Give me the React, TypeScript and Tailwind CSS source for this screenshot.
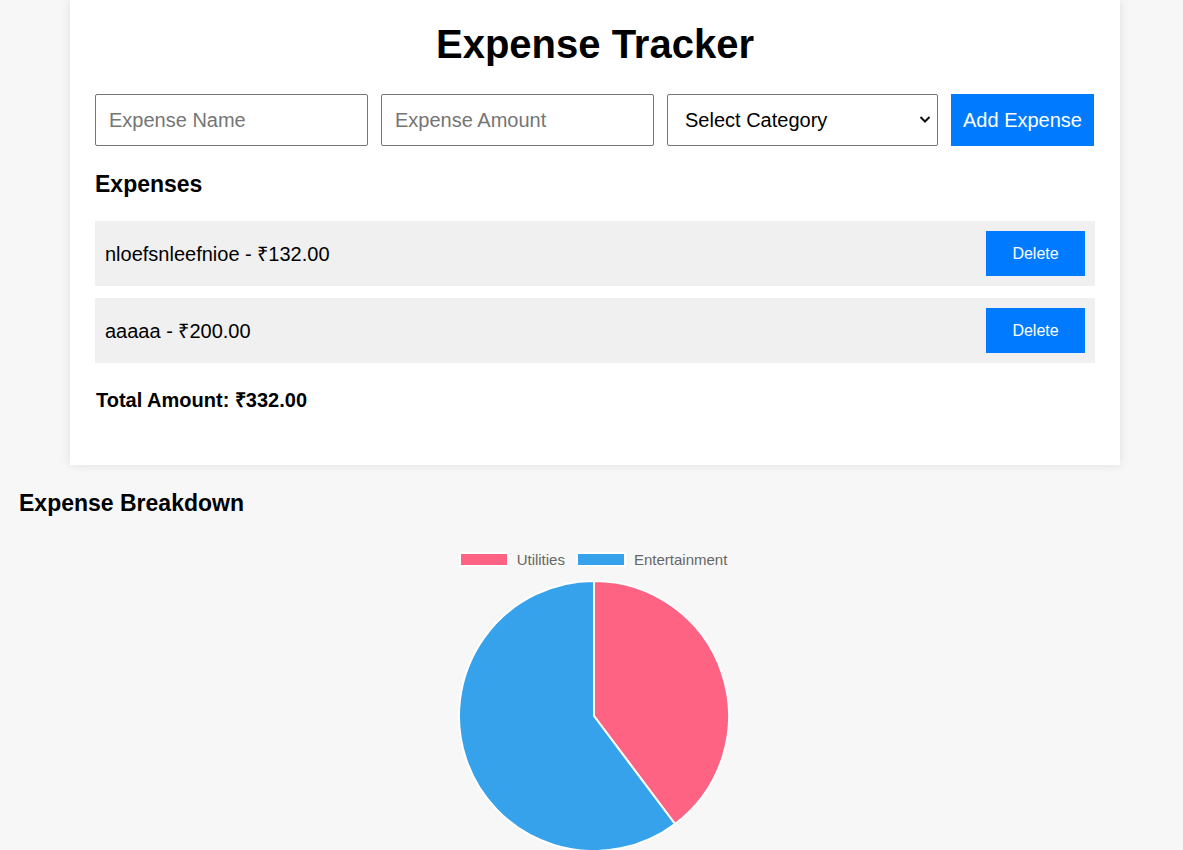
import { useState } from 'react';

type Expense = { id: number, name: string, amount: number, category: string };

const initialExpenses: Expense[] = [
  { id: 1, name: 'nloefsnleefnioe', amount: 132, category: 'Utilities' },
  { id: 2, name: 'aaaaa', amount: 200, category: 'Entertainment' },
];

const colors: Record<string, string> = {
  Utilities: '#ff6384',
  Entertainment: '#36a2eb',
};

function PieChart(props: { expenses: Expense[] }) {
  const totals: Record<string, number> = {};
  props.expenses.forEach(e => { totals[e.category] = (totals[e.category] || 0) + e.amount; });
  const entries = Object.entries(totals);
  const sum = entries.reduce((s, [, v]) => s + v, 0);

  const cx = 137, cy = 137, r = 135;
  let angle = 0;
  const slices = entries.map(([name, value]) => {
    const start = angle;
    angle += (value / sum) * Math.PI * 2;
    const x1 = cx + r * Math.sin(start), y1 = cy - r * Math.cos(start);
    const x2 = cx + r * Math.sin(angle), y2 = cy - r * Math.cos(angle);
    const large = angle - start > Math.PI ? 1 : 0;
    return { name, d: `M${cx},${cy} L${x1},${y1} A${r},${r} 0 ${large} 1 ${x2},${y2} Z` };
  });

  return (
    <div className="flex flex-col items-center pl-[5px]">
      <div className="flex items-center gap-[9px] h-[15px] text-[15px] text-[#666]">
        {entries.map(([name]) => (
          <div key={`legend-${name}`} className="flex items-center gap-[8px] mr-[2px]">
            <span className="block w-[50px] h-[15px] border-2 border-white" style={{ backgroundColor: colors[name] }}/>
            <span className="leading-[15px]">{name}</span>
          </div>
        ))}
      </div>
      <svg width="274" height="274" viewBox="0 0 274 274" className="mt-[12px]">
        {slices.map(s => (
          <path key={`slice-${s.name}`} d={s.d} fill={colors[s.name]} stroke="#fff" strokeWidth="2" strokeLinejoin="round"/>
        ))}
      </svg>
    </div>
  );
}

export default function App() {
  const [expenses] = useState(initialExpenses);
  const total = expenses.reduce((s, e) => s + e.amount, 0);

  return (
    <div className="min-h-screen bg-[#f7f7f7] font-['Liberation_Sans',Arial,sans-serif] text-black overflow-hidden h-[850px]">
      <div className="ml-[70px] w-[1050px] bg-white shadow-[0_0_10px_rgba(0,0,0,0.1)] px-[25px] pt-[21px] pb-[53px]">
        <h1 className="text-center text-[40px] leading-[46px] font-bold mb-[27px]">Expense Tracker</h1>

        <div className="flex gap-[13px] h-[52px]">
          <input
            placeholder="Expense Name"
            className="w-[273px] h-full border border-[#767676] rounded-[2px] px-[13px] text-[20px] placeholder:text-[#757575]"/>
          <input
            placeholder="Expense Amount"
            className="w-[273px] h-full border border-[#767676] rounded-[2px] px-[13px] text-[20px] placeholder:text-[#757575]"/>
          <div className="relative w-[271px] h-full">
            <select className="appearance-none w-full h-full border border-[#767676] rounded-[2px] pl-[17px] text-[20px] bg-white">
              <option>Select Category</option>
              <option>Utilities</option>
              <option>Entertainment</option>
            </select>
            <svg className="absolute right-[7px] top-[21px] pointer-events-none" width="12" height="9" viewBox="0 0 12 9">
              <path d="M1.5 2 L6 6.5 L10.5 2" fill="none" stroke="#111" strokeWidth="2"/>
            </svg>
          </div>
          <button className="w-[143px] h-full bg-[#007bff] text-white text-[20px]">Add Expense</button>
        </div>

        <h3 className="text-[23px] leading-[27px] font-bold mt-[25px] mb-[23px]">Expenses</h3>

        <ul className="flex flex-col gap-[12px]">
          {expenses.map(e => (
            <li key={`expense-${e.id}`} className="flex justify-between items-center h-[65px] bg-[#f0f0f0] pl-[10px] pr-[10px]">
              <span className="text-[20px]">{e.name} - ₹{e.amount.toFixed(2)}</span>
              <button className="w-[99px] h-[45px] bg-[#007bff] text-white text-[16px]">Delete</button>
            </li>
          ))}
        </ul>

        <p className="mt-[26px] text-[20px] leading-[23px] font-bold pl-[1px]">Total Amount: ₹{total.toFixed(2)}</p>
      </div>

      <div className="px-[19px] pt-[25px]">
        <h3 className="text-[23px] leading-[27px] font-bold">Expense Breakdown</h3>
      </div>

      <div className="mt-[35px]">
        <PieChart expenses={expenses}/>
      </div>
    </div>
  );
}
